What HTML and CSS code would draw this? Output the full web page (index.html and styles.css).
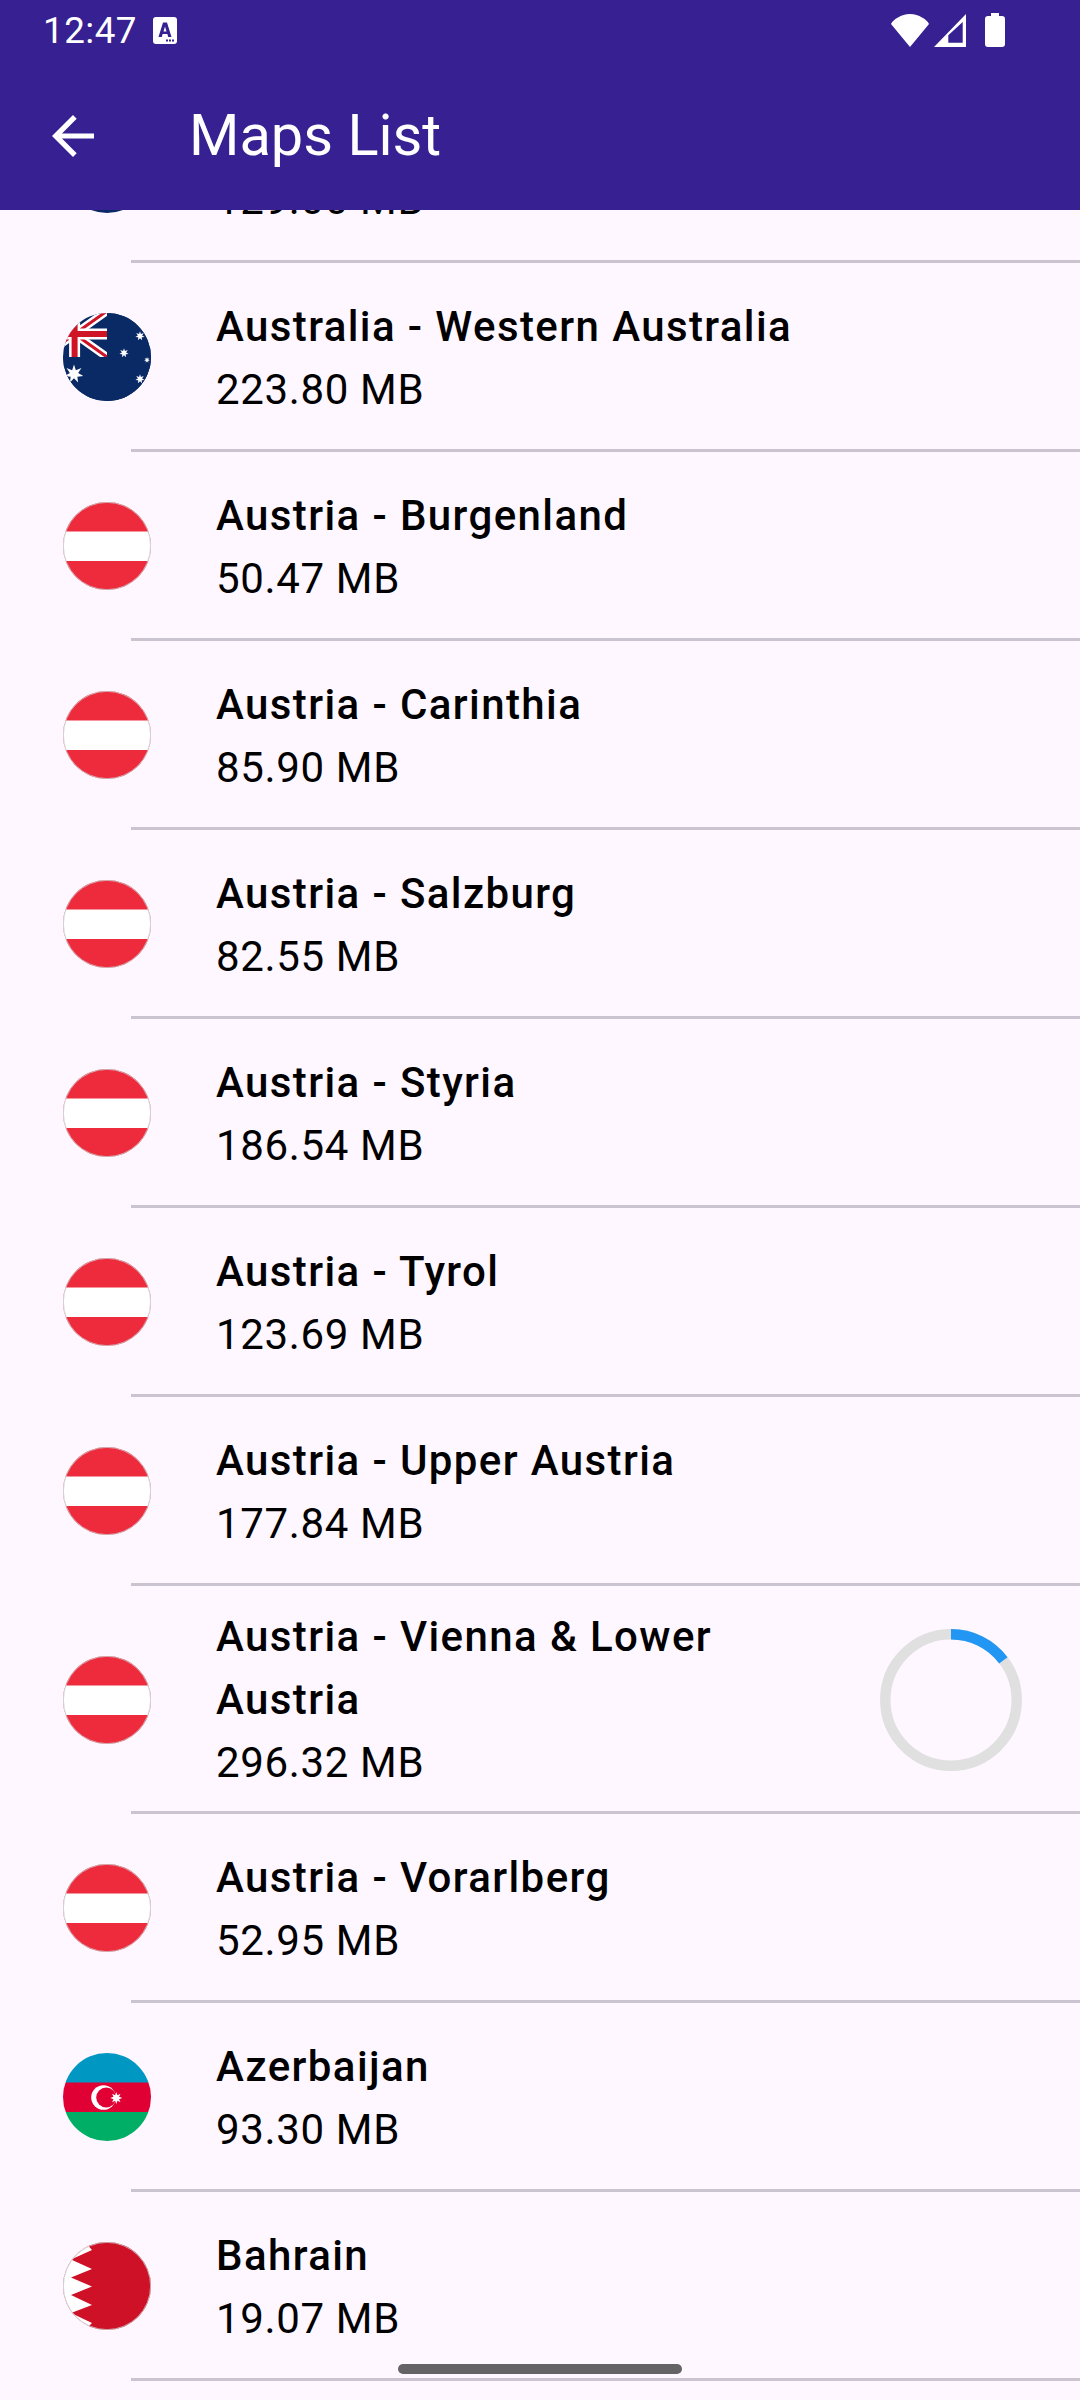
FILE: index.html
```html
<!DOCTYPE html>
<html lang="en">
<head>
  <meta charset="UTF-8" />
  <title>Maps List</title>
  <link rel="stylesheet" href="styles.css">
</head>
<body>
  <svg class="defs" width="0" height="0">
    <defs>
      <clipPath id="round"><circle cx="44" cy="44" r="44" /></clipPath>
      <path id="star7" d="M0 -1 L.195 -.405 L.782 -.623 L.439 -.1 L.975 .223 L.352 .281 L.434 .901 L0 .45 L-.434 .901 L-.352 .281 L-.975 .223 L-.439 -.1 L-.782 -.623 L-.195 -.405 Z" fill="#fff" />
      <symbol id="flag-at" viewBox="0 0 88 88">
        <g clip-path="url(#round)">
          <rect width="88" height="88" fill="#ee2b3c" />
          <rect y="29.5" width="88" height="29.5" fill="#fff" />
        </g>
        <circle cx="44" cy="44" r="43.6" fill="none" stroke="#c9c9c9" stroke-width="0.8" />
      </symbol>
    </defs>
  </svg>

  <div class="screen">
    <header class="appbar">
      <div class="status">
        <span class="time">12:47</span>
        <svg class="status-a" width="24" height="27" viewBox="0 0 24 27">
          <rect width="24" height="27" rx="3" fill="#fff" />
          <path d="M10 5.500 H14 L18.500 20 H15.200 L14.400 17 H9.600 L8.800 20 H5.500 Z M12 9.500 L10.500 14.500 H13.500 Z" fill="#372092" fill-rule="evenodd" />
          <path d="M13 22.500 H15 V24.500 H13 Z M16 22.500 H18 V24.500 H16 Z M19 22.500 H21 V24.500 H19 Z" fill="#372092" />
        </svg>
        <span class="spacer"></span>
        <svg width="40" height="33" viewBox="0 0 40 33"><path d="M20 33 L1 10 Q3 6 8 3.500 Q13 0 20 0 Q27 0 32 3.500 Q37 6 39 10 Z" fill="#fff" /></svg>
        <svg class="status-signal" width="32" height="33" viewBox="0 0 32 33"><path d="M32 0 V33 H0 Z M28.700 8 L14.300 21.300 V28.700 H28.700 Z" fill="#fff" fill-rule="evenodd" /></svg>
        <svg class="status-batt" width="20" height="34" viewBox="0 0 20 34"><path d="M6 0 H14 V3 H17 Q20 3 20 6 V31 Q20 34 17 34 H3 Q0 34 0 31 V6 Q0 3 3 3 H6 Z" fill="#fff" /></svg>
      </div>
      <div class="toolbar">
        <svg class="back" width="42" height="42" viewBox="0 0 42 42"><path d="M42 18.400 H10 L24.700 3.700 21 0 0 21 21 42 24.700 38.300 10 23.600 H42 Z" fill="#fff" /></svg>
        <h1>Maps List</h1>
      </div>
    </header>

    <main class="list">
      <div class="row row-cut">
        <svg class="flag" width="88" height="88" viewBox="0 0 88 88"><circle cx="44" cy="44" r="44" fill="#0a2a66" /></svg>
        <div class="info"><div class="size">129.00 MB</div></div>
      </div>
      <div class="row">
        <svg class="flag" width="88" height="88" viewBox="0 0 88 88">
          <g clip-path="url(#round)">
            <rect width="88" height="88" fill="#0a2a66" />
            <path d="M11.600 21 L44 44 M11.600 21 L44 -2 M11.600 21 L-20 44 M11.600 21 L-20 -2" stroke="#fff" stroke-width="8" />
            <path d="M11.600 21 L44 44 M11.600 21 L44 -2 M11.600 21 L-20 44 M11.600 21 L-20 -2" stroke="#cf1426" stroke-width="3" />
            <path d="M11.600 -4 V44 M-20 21 H44" stroke="#fff" stroke-width="11" />
            <path d="M11.600 -4 V44 M-20 21 H44" stroke="#cf1426" stroke-width="6" />
            <rect x="44" width="44" height="88" fill="#0a2a66" />
            <rect y="44" width="88" height="44" fill="#0a2a66" />
            <use href="#star7" transform="translate(11 61) scale(9.500)" />
            <use href="#star7" transform="translate(77 23) scale(4.800)" />
            <use href="#star7" transform="translate(61 40) scale(4.800)" />
            <use href="#star7" transform="translate(84 47) scale(3)" />
            <use href="#star7" transform="translate(77 66) scale(4.800)" />
          </g>
        </svg>
        <div class="info"><div class="name">Australia - Western Australia</div><div class="size">223.80 MB</div></div>
      </div>
      <div class="row">
        <svg class="flag" width="88" height="88"><use href="#flag-at" /></svg>
        <div class="info"><div class="name">Austria - Burgenland</div><div class="size">50.47 MB</div></div>
      </div>
      <div class="row">
        <svg class="flag" width="88" height="88"><use href="#flag-at" /></svg>
        <div class="info"><div class="name">Austria - Carinthia</div><div class="size">85.90 MB</div></div>
      </div>
      <div class="row">
        <svg class="flag" width="88" height="88"><use href="#flag-at" /></svg>
        <div class="info"><div class="name">Austria - Salzburg</div><div class="size">82.55 MB</div></div>
      </div>
      <div class="row">
        <svg class="flag" width="88" height="88"><use href="#flag-at" /></svg>
        <div class="info"><div class="name">Austria - Styria</div><div class="size">186.54 MB</div></div>
      </div>
      <div class="row">
        <svg class="flag" width="88" height="88"><use href="#flag-at" /></svg>
        <div class="info"><div class="name">Austria - Tyrol</div><div class="size">123.69 MB</div></div>
      </div>
      <div class="row">
        <svg class="flag" width="88" height="88"><use href="#flag-at" /></svg>
        <div class="info"><div class="name">Austria - Upper Austria</div><div class="size">177.84 MB</div></div>
      </div>
      <div class="row row-tall">
        <svg class="flag" width="88" height="88"><use href="#flag-at" /></svg>
        <div class="info info-narrow"><div class="name">Austria - Vienna &amp; Lower Austria</div><div class="size">296.32 MB</div></div>
        <svg class="spinner" width="142" height="142" viewBox="0 0 142 142">
          <circle cx="71" cy="71" r="65.700" fill="none" stroke="#e0e0e0" stroke-width="10.500" />
          <circle cx="71" cy="71" r="65.700" fill="none" stroke="#2196f3" stroke-width="10.500" stroke-dasharray="60.500 400" transform="rotate(-90 71 71)" />
        </svg>
      </div>
      <div class="row">
        <svg class="flag" width="88" height="88"><use href="#flag-at" /></svg>
        <div class="info"><div class="name">Austria - Vorarlberg</div><div class="size">52.95 MB</div></div>
      </div>
      <div class="row">
        <svg class="flag" width="88" height="88" viewBox="0 0 88 88">
          <g clip-path="url(#round)">
            <rect width="88" height="30" fill="#0097c3" />
            <rect y="29.500" width="88" height="29.500" fill="#e00034" />
            <rect y="59" width="88" height="29" fill="#00ae65" />
            <circle cx="40.500" cy="44.500" r="12.300" fill="#fff" />
            <circle cx="43.200" cy="44.500" r="10" fill="#e00034" />
            <path d="M0 -6 L1.150 -2.770 L4.240 -4.240 L2.770 -1.150 L6 0 L2.770 1.150 L4.240 4.240 L1.150 2.770 L0 6 L-1.150 2.770 L-4.240 4.240 L-2.770 1.150 L-6 0 L-2.770 -1.150 L-4.240 -4.240 L-1.150 -2.770 Z" fill="#fff" transform="translate(53.300 45)" />
          </g>
        </svg>
        <div class="info"><div class="name">Azerbaijan</div><div class="size">93.30 MB</div></div>
      </div>
      <div class="row">
        <svg class="flag" width="88" height="88" viewBox="0 0 88 88">
          <g clip-path="url(#round)">
            <rect width="88" height="88" fill="#ce1126" />
            <path d="M0 0 H22 L29 8 L8 17.500 L29 27 L8 35.500 L29 44.500 L8 53 L29 63 L8 71 L29 81 L22 88 H0 Z" fill="#fff" />
          </g>
          <circle cx="44" cy="44" r="43.600" fill="none" stroke="#c9c9c9" stroke-width="0.800" />
        </svg>
        <div class="info"><div class="name">Bahrain</div><div class="size">19.07 MB</div></div>
      </div>
    </main>

    <div class="handle"></div>
  </div>
</body>
</html>
```

FILE: styles.css
```css
* {
  box-sizing: border-box;
}

html, body {
  margin: 0;
  padding: 0;
}

body {
  font-family: 'Roboto', sans-serif;
  background-color: #fef7ff;
}

.defs {
  display: block;
  height: 0;
}

.screen {
  height: 2400px;
  overflow: hidden;
  display: flex;
  flex-direction: column;
  position: relative;
}

.appbar {
  flex: none;
  height: 210px;
  background-color: #372092;
  color: white;
}

.status {
  height: 60px;
  padding: 0 75px 0 43px;
  display: flex;
  align-items: center;
}

.time {
  font-size: 36.750px;
  letter-spacing: 0.500px;
}

.status-a {
  margin-left: 16px;
}

.spacer {
  flex: 1;
}

.status-signal {
  margin-left: 4px;
}

.status-batt {
  margin-left: 19px;
}

.toolbar {
  height: 150px;
  padding-left: 52px;
  padding-top: 1px;
  display: flex;
  align-items: center;
}

.back {
  flex: none;
}

h1 {
  margin: 0 0 2px 95px;
  font-size: 57.750px;
  font-weight: 400;
}

.list {
  flex: 1;
  min-height: 0;
  overflow: hidden;
}

.row {
  height: 189px;
  padding: 2px 58px 3px 63px;
  display: flex;
  align-items: center;
  position: relative;
}

.row::after {
  content: "";
  position: absolute;
  left: 131px;
  right: 0;
  bottom: 0;
  height: 3px;
  background-color: #cac4d0;
}

.row-cut {
  height: 53px;
  padding-top: 0;
  padding-bottom: 32px;
  align-items: flex-end;
}

.row-cut .flag {
  margin-bottom: 18px;
}

.row-tall {
  height: 228px;
}

.flag {
  flex: none;
}

.info {
  flex: 1;
  min-width: 0;
  margin-left: 65px;
  padding-top: 1px;
  font-size: 42px;
  line-height: 63px;
  color: black;
}

.info-narrow {
  padding-top: 0;
  padding-right: 100px;
  margin-bottom: 1px;
}

.name {
  font-weight: 500;
  letter-spacing: 1.400px;
}

.size {
  letter-spacing: 0.650px;
}

.spinner {
  flex: none;
}

.handle {
  position: absolute;
  left: 398px;
  top: 2364px;
  width: 284px;
  height: 10px;
  border-radius: 5px;
  background-color: #666367;
}
```
